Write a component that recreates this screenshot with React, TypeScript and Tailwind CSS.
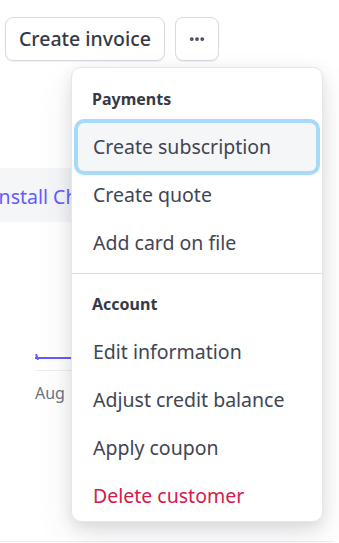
import { MoreHorizontal } from "lucide-react";

const font = { fontFamily: '"Noto Sans", "Open Sans", sans-serif' };

const payments = ["Create subscription", "Create quote", "Add card on file"];
const account = ["Edit information", "Adjust credit balance", "Apply coupon"];

const MenuItem = ({ label, active = false, danger = false }: { label: string; active?: boolean; danger?: boolean }) => (
  <div
    className={`h-12 mx-[6px] px-[15px] flex items-center rounded-[6px] text-[19.5px] ${
      active ? "bg-[#f5f6f8] ring-4 ring-[#a7d9f8]" : ""
    } ${danger ? "text-[#d5194a]" : "text-[#414552]"}`}
  >
    {label}
  </div>
);

export default function App() {
  return (
    <div className="relative w-[339px] h-[543px] bg-white overflow-hidden" style={font}>
      {/* page header actions */}
      <div className="flex gap-[10px] pt-[17px] pl-[5px]">
        <button className="h-[44px] w-[160px] rounded-[8px] border border-[#d5dbe1] bg-white text-[19.5px] font-medium text-[#353a44] shadow-[0_1px_1px_rgba(0,0,0,0.06)]">
          Create invoice
        </button>
        <button className="h-[44px] w-[44px] flex items-center justify-center rounded-[8px] border border-[#d5dbe1] bg-white text-[#414552] shadow-[0_1px_1px_rgba(0,0,0,0.06)]">
          <MoreHorizontal size={18} strokeWidth={3} />
        </button>
      </div>

      {/* content behind the menu */}
      <div className="mt-[107px] w-[200px] h-[54px] pt-[4px] bg-[#f5f6f8] flex items-center overflow-hidden">
        <span className="-ml-[8px] whitespace-nowrap text-[19.5px] text-[#635bff]">Install Chrome</span>
      </div>

      <div className="mt-[135px] ml-[35px] w-[180px]">
        <div className="relative h-[2px] bg-[#635bff]">
          <div className="absolute left-[1px] -top-[3px] w-[2px] h-[6px] bg-[#635bff] rotate-[-20deg]" />
        </div>
        <div className="mt-[11px] h-px bg-[#ebeef1]" />
        <div className="mt-[10px] text-[16px] text-[#687385]">Aug</div>
      </div>

      <div className="absolute left-0 right-[3px] top-[541px] h-[4px] border-t border-[#ebeef1] rounded-tr-[6px]" />

      {/* dropdown */}
      <div className="absolute left-[71px] top-[67px] w-[252px] rounded-[10px] border border-[#e3e6ea] bg-white pt-[7px] pb-[1px] shadow-[0_5px_15px_rgba(0,0,0,0.1),0_15px_35px_rgba(60,66,87,0.1)]">
        <div className="h-12 px-[20px] flex items-center text-[16px] font-bold text-[#353a44]">Payments</div>
        {payments.map((p, i) => (
          <MenuItem key={p} label={p} active={i === 0} />
        ))}
        <div className="my-[6px] h-px bg-[#d8dde3]" />
        <div className="h-12 mt-[3px] px-[20px] flex items-center text-[16px] font-bold text-[#353a44]">Account</div>
        {account.map((a) => (
          <MenuItem key={a} label={a} />
        ))}
        <MenuItem label="Delete customer" danger />
      </div>
    </div>
  );
}
